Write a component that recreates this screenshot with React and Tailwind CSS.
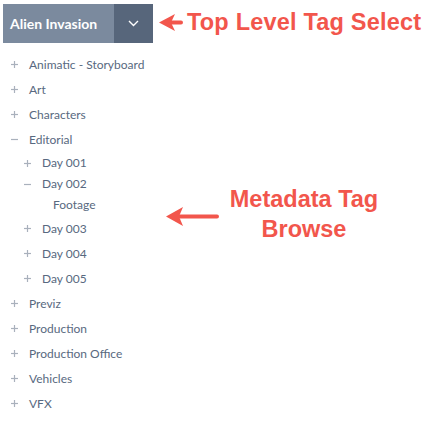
import React from "react";

const tree = [
   { label: "Animatic - Storyboard", icon: "plus", depth: 0, h: "h-[25px]" },
   { label: "Art", icon: "plus", depth: 0, h: "h-[25px]" },
   { label: "Characters", icon: "plus", depth: 0, h: "h-[25px]" },
   { label: "Editorial", icon: "minus", depth: 0, h: "h-[25px]" },
   { label: "Day 001", icon: "plus", depth: 1, h: "h-[22px]" },
   { label: "Day 002", icon: "minus", depth: 1, h: "h-[20px]" },
   { label: "Footage", icon: null, depth: 2, h: "h-[22px]" },
   { label: "Day 003", icon: "plus", depth: 1, h: "h-[25px]" },
   { label: "Day 004", icon: "plus", depth: 1, h: "h-[25px]" },
   { label: "Day 005", icon: "plus", depth: 1, h: "h-[25px]" },
   { label: "Previz", icon: "plus", depth: 0, h: "h-[25px]" },
   { label: "Production", icon: "plus", depth: 0, h: "h-[25px]" },
   { label: "Production Office", icon: "plus", depth: 0, h: "h-[25px]" },
   { label: "Vehicles", icon: "plus", depth: 0, h: "h-[25px]" },
   { label: "VFX", icon: "plus", depth: 0, h: "h-[25px]" },
];

const indent = ["pl-[10px]", "pl-[23px]", "pl-[53px]"];

const Toggle = ({ type }) => (
   <svg width="9" height="9" viewBox="0 0 9 9" className="shrink-0">
      <path d="M1 4.5h7" stroke="#a9b1bc" strokeWidth="1.2" />
      {type === "plus" && <path d="M4.5 1v7" stroke="#a9b1bc" strokeWidth="1.2" />}
   </svg>
);

// red annotation arrow, pointing left
const Arrow = ({ length, head, tall }) => (
   <svg width={length} height={tall} viewBox={`0 0 ${length} ${tall}`}>
      <path
         d={`M${length - 2} ${tall / 2}H${head - 3}`}
         stroke="#f2564c"
         strokeWidth="4"
         strokeLinecap="round"
      />
      <path
         d={`M0 ${tall / 2} L${head} 0 L${head - 4} ${tall / 2} L${head} ${tall} Z`}
         fill="#f2564c"
      />
   </svg>
);

const App = () => {
   return (
      <div
         className="relative w-[435px] h-[435px] bg-white overflow-hidden"
         style={{ fontFamily: "Lato, 'Open Sans', sans-serif" }}
      >
         <div className="ml-[3px] mt-[4px] flex h-[39px] w-[150px]">
            <div className="flex flex-1 items-center bg-[#7b8a9e] pl-[7px] text-[14px] font-bold text-white">
               Alien Invasion
            </div>
            <div className="flex w-[39px] items-center justify-center bg-[#57667b]">
               <svg width="11" height="7" viewBox="0 0 11 7">
                  <path d="M1 1l4.5 4.5L10 1" stroke="white" strokeWidth="1.4" fill="none" />
               </svg>
            </div>
         </div>

         <ul className="mt-[9px]">
            {tree.map((row) => (
               <li
                  key={row.label}
                  className={`flex items-center ${row.h} ${indent[row.depth]} text-[12px] text-[#586980]`}
               >
                  {row.icon && <Toggle type={row.icon} />}
                  <span className={row.icon ? "ml-[10px]" : ""}>{row.label}</span>
               </li>
            ))}
         </ul>

         <div
            className="absolute left-[159px] top-[8px] flex items-center gap-[4px] text-[23.5px] font-bold text-[#f2564c] tracking-[0.2px]"
            style={{ fontFamily: "'Liberation Sans', Arial, sans-serif" }}
         >
            <Arrow length={24} head={16} tall={17} />
            <span className="leading-[28px]">Top Level Tag Select</span>
         </div>

         <div className="absolute left-[166px] top-[207px]">
            <Arrow length={53} head={17} tall={19} />
         </div>

         <div
            className="absolute left-[229px] top-[184px] w-[150px] text-center text-[23.5px] leading-[30px] font-bold text-[#f2564c]"
            style={{ fontFamily: "'Liberation Sans', Arial, sans-serif" }}
         >
            Metadata Tag
            <br />
            Browse
         </div>
      </div>
   );
};

export default App;
